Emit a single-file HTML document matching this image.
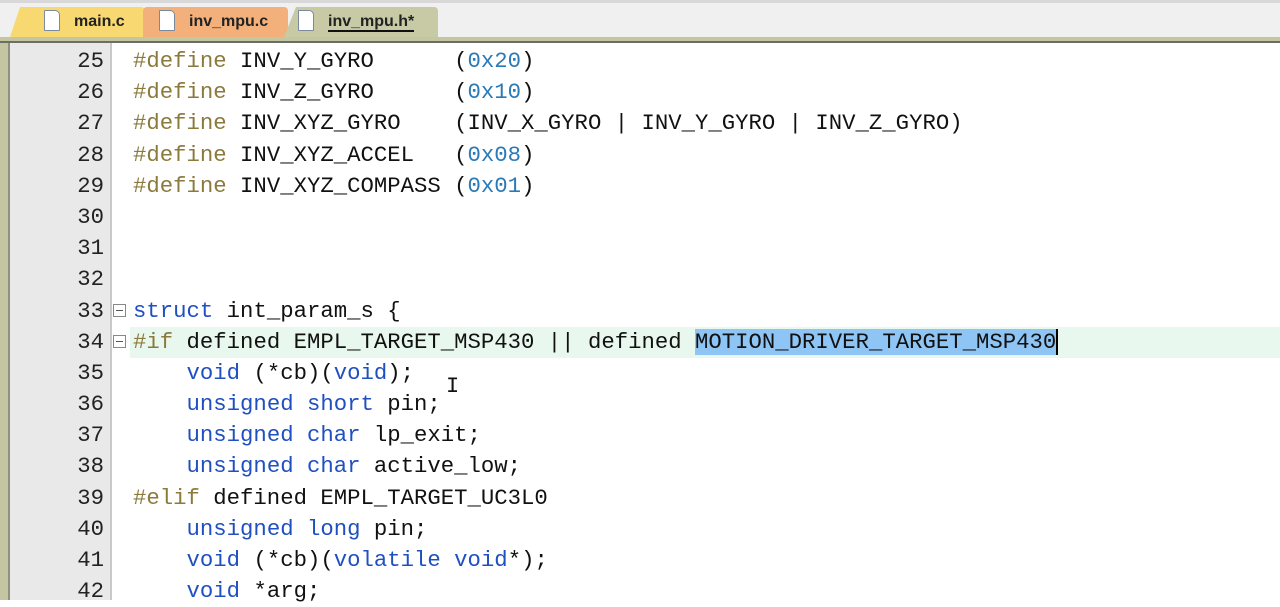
<!DOCTYPE html><html><head><style>
body{margin:0;width:1280px;height:600px;overflow:hidden;background:#fff;position:relative;font-family:"Liberation Sans",sans-serif}
.tabbar{position:absolute;left:0;top:0;width:1280px;height:37px;background:#f0f0f0;border-top:3px solid #d8d8d8;box-sizing:border-box}
.gl{position:absolute;left:0;top:37px;width:1280px;height:4px;background:#c3c6a0}
.dl{position:absolute;left:0;top:41px;width:1280px;height:2px;background:#6b6d66}
.tab{position:absolute;top:7px;height:30px;border-radius:4px 4px 0 0;font-size:16px;font-weight:bold;color:#222;line-height:30px;box-sizing:border-box}
.ic{display:inline-block;width:14px;height:19px;border:1px solid #7a8aa0;background:#fff;vertical-align:-5px;margin-right:14px;border-radius:1px 5px 1px 1px}
.strip{position:absolute;left:0;top:43px;width:8px;height:557px;background:#c3c6a0}
.gut{position:absolute;left:8px;top:43px;width:102px;height:557px;background:#e9e9e9;border-left:2px solid #8f917f}
.gl2{position:absolute;left:110px;top:43px;width:2px;height:557px;background:#c8c8c8}
.code{position:absolute;left:0;top:46px;width:1280px;font-family:"Liberation Mono",monospace;font-size:22.3px;color:#111}
.ln{height:31.2px;line-height:31.2px;position:relative;white-space:pre}
.n{position:absolute;left:40px;width:64px;text-align:right;color:#222}
.t{position:absolute;left:133px}
.p{color:#8b7a3c}.k{color:#1f4fc0}.h{color:#2a7ab8}
.hl{background:#e8f8ee}
.sel{background:#8ec5f5}
.fold{position:absolute;left:113px;top:8px;width:13px;height:13px;border:1px solid #888;box-sizing:border-box;background:#fff}
.fold:after{content:"";position:absolute;left:2px;top:5px;width:7px;height:1px;background:#555}
</style></head><body>
<div class="tabbar"></div>
<div class="tab" style="left:10px;width:135px;background:#f8d870;padding-left:34px;clip-path:polygon(10px 0,100% 0,100% 100%,0 100%)"><span class="ic"></span>main.c</div>
<div class="tab" style="left:143px;width:145px;background:#f3b07a;padding-left:16px"><span class="ic"></span>inv_mpu.c</div>
<div class="tab" style="left:284px;width:154px;background:#c7caa5;padding-left:14px;clip-path:polygon(12px 0,100% 0,100% 100%,0 100%)"><span class="ic"></span><span style="border-bottom:2px solid #111">inv_mpu.h*</span></div>
<div class="gl"></div><div class="dl"></div>
<div class="strip"></div><div class="gut"></div><div class="gl2"></div>
<div class="code">
<div class="ln"><span class="n">25</span><span class="t"><span class="p">#define</span> INV_Y_GYRO      (<span class="h">0x20</span>)</span></div>
<div class="ln"><span class="n">26</span><span class="t"><span class="p">#define</span> INV_Z_GYRO      (<span class="h">0x10</span>)</span></div>
<div class="ln"><span class="n">27</span><span class="t"><span class="p">#define</span> INV_XYZ_GYRO    (INV_X_GYRO | INV_Y_GYRO | INV_Z_GYRO)</span></div>
<div class="ln"><span class="n">28</span><span class="t"><span class="p">#define</span> INV_XYZ_ACCEL   (<span class="h">0x08</span>)</span></div>
<div class="ln"><span class="n">29</span><span class="t"><span class="p">#define</span> INV_XYZ_COMPASS (<span class="h">0x01</span>)</span></div>
<div class="ln"><span class="n">30</span></div>
<div class="ln"><span class="n">31</span></div>
<div class="ln"><span class="n">32</span></div>
<div class="ln"><span class="n">33</span><span class="fold"></span><span class="t"><span class="k">struct</span> int_param_s {</span></div>
<div class="ln"><div style="position:absolute;left:130px;right:0;top:0;bottom:0" class="hl"></div><span class="n">34</span><span class="fold"></span><span class="t"><span class="p">#if</span> defined EMPL_TARGET_MSP430 || defined <span class="sel">MOTION_DRIVER_TARGET_MSP430</span><span style="border-left:2px solid #000"></span></span></div>
<div class="ln"><span class="n">35</span><span class="t">    <span class="k">void</span> (*cb)(<span class="k">void</span>);</span></div>
<div class="ln"><span class="n">36</span><span class="t">    <span class="k">unsigned short</span> pin;</span></div>
<div class="ln"><span class="n">37</span><span class="t">    <span class="k">unsigned char</span> lp_exit;</span></div>
<div class="ln"><span class="n">38</span><span class="t">    <span class="k">unsigned char</span> active_low;</span></div>
<div class="ln"><span class="n">39</span><span class="t"><span class="p">#elif</span> defined EMPL_TARGET_UC3L0</span></div>
<div class="ln"><span class="n">40</span><span class="t">    <span class="k">unsigned long</span> pin;</span></div>
<div class="ln"><span class="n">41</span><span class="t">    <span class="k">void</span> (*cb)(<span class="k">volatile void</span>*);</span></div>
<div class="ln"><span class="n">42</span><span class="t">    <span class="k">void</span> *arg;</span></div>
</div>
<div style="position:absolute;left:446px;top:374px;font-family:'Liberation Mono',monospace;font-size:22px;color:#111">I</div>
</body></html>
